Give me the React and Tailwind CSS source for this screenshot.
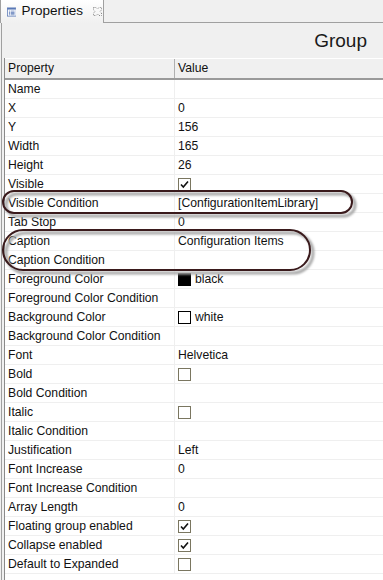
import React from 'react';

const rows = [
    { name: 'Name' },
    { name: 'X', value: '0' },
    { name: 'Y', value: '156' },
    { name: 'Width', value: '165' },
    { name: 'Height', value: '26' },
    { name: 'Visible', check: true },
    { name: 'Visible Condition', value: '[ConfigurationItemLibrary]' },
    { name: 'Tab Stop', value: '0' },
    { name: 'Caption', value: 'Configuration Items' },
    { name: 'Caption Condition' },
    { name: 'Foreground Color', color: 'black' },
    { name: 'Foreground Color Condition' },
    { name: 'Background Color', color: 'white' },
    { name: 'Background Color Condition' },
    { name: 'Font', value: 'Helvetica' },
    { name: 'Bold', check: false },
    { name: 'Bold Condition' },
    { name: 'Italic', check: false },
    { name: 'Italic Condition' },
    { name: 'Justification', value: 'Left' },
    { name: 'Font Increase', value: '0' },
    { name: 'Font Increase Condition' },
    { name: 'Array Length', value: '0' },
    { name: 'Floating group enabled', check: true },
    { name: 'Collapse enabled', check: true },
    { name: 'Default to Expanded', check: false },
];

const CheckBox = ({ checked }) => (
    <span className="w-[13px] h-[13px] border border-[#7a7660] bg-white flex items-center justify-center">
        {checked && (
            <svg width="9" height="9" viewBox="0 0 9 9">
                <path d="M1 4.5 L3.3 7 L8 1.5" fill="none" stroke="#111" strokeWidth="1.6" />
            </svg>
        )}
    </span>
);

const ValueCell = ({ row }) => {
    if (row.check !== undefined) return <CheckBox checked={row.check} />;
    if (row.color) {
        return (
            <span className="flex items-center gap-[4px]">
                <span
                    className={
                        row.color === 'black'
                            ? 'w-[13px] h-[13px] bg-black border border-black'
                            : 'w-[13px] h-[13px] bg-white border border-black'
                    }
                />
                <span>{row.color}</span>
            </span>
        );
    }
    return <span>{row.value}</span>;
};

const TabIcon = () => (
    <svg width="15" height="14" viewBox="0 0 15 14">
        <rect x="0.5" y="0.5" width="14" height="13" fill="#fff" stroke="#3a5ea8" />
        <rect x="1" y="1" width="13" height="2" fill="#3a5ea8" />
        <rect x="3" y="5" width="2" height="1" fill="#3a5ea8" />
        <rect x="6" y="5" width="6" height="1" fill="#3a5ea8" />
        <rect x="3" y="7" width="2" height="1" fill="#3a5ea8" />
        <rect x="6" y="7" width="6" height="1" fill="#3a5ea8" />
        <rect x="3" y="9" width="2" height="1" fill="#3a5ea8" />
        <rect x="6" y="9" width="6" height="1" fill="#3a5ea8" />
        <rect x="3" y="11" width="2" height="1" fill="#3a5ea8" />
        <rect x="6" y="11" width="6" height="1" fill="#3a5ea8" />
    </svg>
);

const CloseIcon = () => (
    <svg width="11" height="11" viewBox="0 0 11 11">
        <path
            d="M1.5 1.5 L4 1.5 L5.5 3 L7 1.5 L9.5 1.5 L9.5 4 L8 5.5 L9.5 7 L9.5 9.5 L7 9.5 L5.5 8 L4 9.5 L1.5 9.5 L1.5 7 L3 5.5 L1.5 4 Z"
            fill="none"
            stroke="#8a8a8a"
            strokeWidth="1"
            strokeDasharray="1 1"
        />
    </svg>
);

export default function App() {
    return (
        <div
            className="relative w-[383px] h-[580px] overflow-hidden bg-[#f0f0f0] text-[12.2px] text-[#111]"
            style={{ fontFamily: '"Liberation Sans", Arial, sans-serif' }}
        >
            {/* tab strip */}
            <div className="flex h-[23px]">
                <div className="w-[104px] flex items-center gap-[5px] pl-[6px] border-l border-r border-[#a0a0a0] bg-gradient-to-b from-white to-[#f0f0f0]">
                    <TabIcon />
                    <span className="text-[13.5px] text-[#111]">Properties</span>
                    <span className="ml-[4px] flex"><CloseIcon /></span>
                </div>
                <div className="flex-1 border-b border-[#a0a0a0]" />
            </div>

            <div className="border-l border-[#a0a0a0] ml-[1px] h-[557px] flex flex-col">
                {/* title */}
                <div className="h-[35px] flex items-center justify-end pr-[16px] pt-[2px]">
                    <span className="text-[19px] text-[#1a1a1a]">Group</span>
                </div>

                {/* table */}
                <div className="ml-[2px] flex-1 border-l border-[#8a8a8a] bg-white flex flex-col">
                    <div className="flex h-[22px] bg-[#f0f0f0] border-t border-white border-b-2 border-b-[#9a9a9a]">
                        <div className="w-[170px] pl-[3px] flex items-center border-r border-[#b0b0b0]">Property</div>
                        <div className="flex-1 pl-[3px] flex items-center">Value</div>
                    </div>
                    {rows.map((row) => (
                        <div key={row.name} className="flex h-[19px] border-b border-[#efefef]">
                            <div className="w-[170px] pl-[3px] flex items-center border-r border-[#efefef]">{row.name}</div>
                            <div className="flex-1 pl-[3px] flex items-center">
                                <ValueCell row={row} />
                            </div>
                        </div>
                    ))}
                </div>
            </div>

            {/* annotation ovals */}
            <svg className="absolute left-0 top-0 pointer-events-none" width="383" height="580">
                <defs>
                    <filter id="soft" x="-10%" y="-50%" width="120%" height="200%">
                        <feGaussianBlur stdDeviation="1.2" />
                    </filter>
                </defs>
                <g filter="url(#soft)">
                    <rect x="6" y="194" width="349" height="22" rx="11" fill="none" stroke="#a8a8a8" strokeWidth="3" />
                    <rect x="6" y="233" width="307" height="40" rx="20" fill="none" stroke="#a8a8a8" strokeWidth="3" />
                </g>
                <rect x="3" y="191" width="349" height="22" rx="11" fill="none" stroke="#3a1a1c" strokeWidth="2" />
                <rect x="3" y="230" width="307" height="40" rx="20" fill="none" stroke="#3a1a1c" strokeWidth="2" />
            </svg>
        </div>
    );
}
